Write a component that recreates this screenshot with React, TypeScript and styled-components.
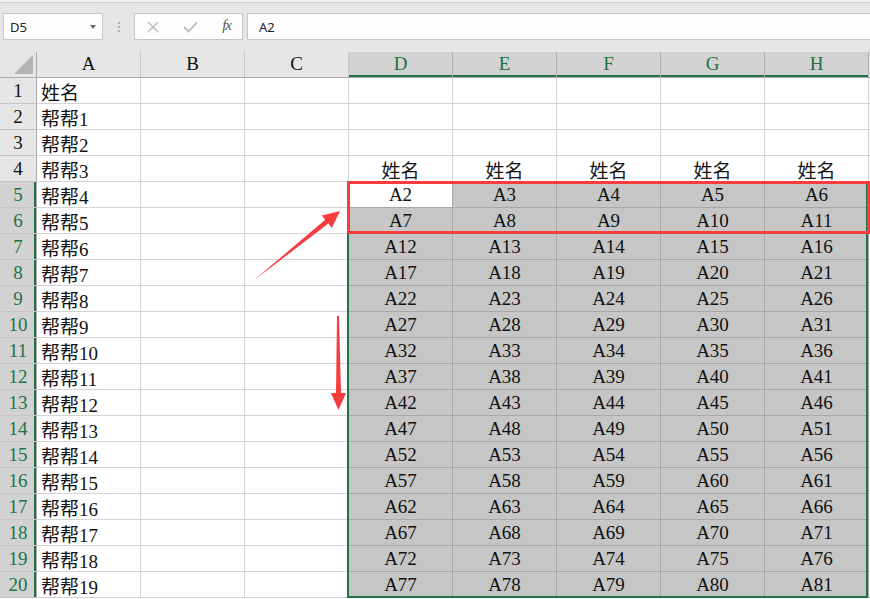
import * as React from 'react';
import styled, { createGlobalStyle } from 'styled-components';

const GREEN = '#217346';
const RED = '#f63c3c';
const COLS = ['A', 'B', 'C', 'D', 'E', 'F', 'G', 'H'];
const ROWS = Array.from({ length: 20 }, (_, i) => i + 1);

const GlobalStyle = createGlobalStyle`
  html, body {
    margin: 0;
    padding: 0;
    background: #ffffff;
    overflow: hidden;
  }
`;

const Page = styled.div`
  position: relative;
  width: 870px;
  height: 599px;
  overflow: hidden;
  font-family: 'Liberation Serif', 'Noto Sans CJK SC', serif;
`;

const TopStrip = styled.div`
  height: 2px;
  background: #f3f3f3;
  border-bottom: 1px solid #d2d2d2;
`;

const Toolbar = styled.div`
  display: flex;
  align-items: center;
  height: 49px;
  box-sizing: border-box;
  padding: 10px 0 12px 3px;
  background: #e6e6e6;
  font-family: 'Noto Sans', 'Open Sans', sans-serif;
  font-size: 13px;
  color: #222;
`;

const Box = styled.div`
  height: 27px;
  box-sizing: border-box;
  background: #fdfdfd;
  border: 1px solid #c6c6c6;
  display: flex;
  align-items: center;
`;

const NameBox = styled(Box)`
  width: 100px;
  padding: 0 6px 0 6px;
  justify-content: space-between;
`;

const DropArrow = styled.span`
  width: 0;
  height: 0;
  border-left: 3.5px solid transparent;
  border-right: 3.5px solid transparent;
  border-top: 4px solid #6a6a6a;
  margin-top: 1px;
`;

const Grip = styled.div`
  width: 31px;
  display: flex;
  flex-direction: column;
  align-items: center;
  gap: 2px;
`;

const GripDot = styled.span`
  width: 2px;
  height: 2px;
  background: #b0b0b0;
`;

const ButtonBox = styled(Box)`
  width: 109px;
  padding: 0 11px 0 12px;
  justify-content: space-between;
`;

const Fx = styled.span`
  font-family: 'Liberation Serif', serif;
  font-style: italic;
  font-size: 15px;
  color: #555;
  letter-spacing: -1px;
  margin-top: -2px;
`;

const FormulaInput = styled(Box)`
  flex: 1;
  margin-left: 4px;
  padding-left: 11px;
  border-right: none;
`;

const Grid = styled.div`
  display: grid;
  grid-template-columns: 37px repeat(8, 104px) 1fr;
  grid-auto-rows: 26px;
  font-size: 19px;
`;

const Corner = styled.div`
  background: #e6e6e6;
  border-right: 1px solid #ababab;
  border-bottom: 1px solid #ababab;
  box-sizing: border-box;
  display: flex;
  align-items: flex-end;
  justify-content: flex-end;
  padding: 0 3px 3px 0;
`;

const CornerMark = styled.span`
  width: 0;
  height: 0;
  border-left: 19px solid transparent;
  border-bottom: 19px solid #b4b4b4;
`;

const ColHead = styled.div<{ $sel?: boolean }>`
  box-sizing: border-box;
  background: ${(p) => (p.$sel ? '#d2d2d2' : '#e6e6e6')};
  color: ${(p) => (p.$sel ? GREEN : '#111')};
  border-right: 1px solid ${(p) => (p.$sel ? '#ababab' : '#c8c8c8')};
  border-bottom: 1px solid #ababab;
  box-shadow: ${(p) => (p.$sel ? `inset 0 -2px 0 ${GREEN}` : 'none')};
  display: flex;
  align-items: center;
  justify-content: center;
  padding-bottom: 1px;
`;

const RowHead = styled.div<{ $sel?: boolean }>`
  box-sizing: border-box;
  background: ${(p) => (p.$sel ? '#d2d2d2' : '#e6e6e6')};
  color: ${(p) => (p.$sel ? GREEN : '#111')};
  border-right: 1px solid #ababab;
  border-bottom: 1px solid #c6c6c6;
  box-shadow: ${(p) => (p.$sel ? `inset -2px 0 0 ${GREEN}` : 'none')};
  display: flex;
  align-items: center;
  justify-content: center;
  padding-top: 1px;
`;

const Cell = styled.div<{ $sel?: boolean; $active?: boolean; $center?: boolean }>`
  box-sizing: border-box;
  background: ${(p) => (p.$sel && !p.$active ? '#c6c6c6' : '#ffffff')};
  border-right: 1px solid ${(p) => (p.$sel ? '#a8a8a8' : '#d4d4d4')};
  border-bottom: 1px solid ${(p) => (p.$sel ? '#a8a8a8' : '#d4d4d4')};
  color: #111;
  display: flex;
  align-items: center;
  justify-content: ${(p) => (p.$center ? 'center' : 'flex-start')};
  padding: 1px 0 0 ${(p) => (p.$center ? '0' : '4px')};
  white-space: nowrap;
  overflow: hidden;
`;

const Selection = styled.div`
  position: absolute;
  left: 347px;
  top: 181px;
  width: 521px;
  height: 417px;
  box-sizing: border-box;
  border: 2px solid ${GREEN};
  pointer-events: none;
`;

const Highlight = styled.div`
  position: absolute;
  left: 347px;
  top: 181px;
  width: 523px;
  height: 53px;
  box-sizing: border-box;
  border: 3px solid ${RED};
  pointer-events: none;
`;

const Annotations = styled.svg`
  position: absolute;
  left: 0;
  top: 0;
  pointer-events: none;
`;

function cellText(row: number, col: number): string {
  if (col === 0) {
    if (row === 1) return '姓名';
    return '帮帮' + (row - 1);
  }
  if (col >= 3 && row === 4) return '姓名';
  if (col >= 3 && row >= 5) return 'A' + (2 + (row - 5) * 5 + (col - 3));
  return '';
}

export default function App() {
  return (
    <Page>
      <GlobalStyle />
      <TopStrip />
      <Toolbar>
        <NameBox>
          <span>D5</span>
          <DropArrow />
        </NameBox>
        <Grip>
          <GripDot />
          <GripDot />
          <GripDot />
        </Grip>
        <ButtonBox>
          <svg width="12" height="12" viewBox="0 0 12 12">
            <path d="M1 1 L11 11 M11 1 L1 11" stroke="#bcbcbc" strokeWidth="1.4" />
          </svg>
          <svg width="15" height="12" viewBox="0 0 15 12">
            <path d="M1 6 L5.5 10.5 L14 1.5" stroke="#bcbcbc" strokeWidth="1.8" fill="none" />
          </svg>
          <Fx>fx</Fx>
        </ButtonBox>
        <FormulaInput>A2</FormulaInput>
      </Toolbar>

      <Grid>
        <Corner>
          <CornerMark />
        </Corner>
        {COLS.map((c, i) => (
          <ColHead key={c} $sel={i >= 3}>
            {c}
          </ColHead>
        ))}
        <ColHead />
        {ROWS.map((r) => (
          <React.Fragment key={r}>
            <RowHead $sel={r >= 5}>{r}</RowHead>
            {COLS.map((c, i) => (
              <Cell
                key={c}
                $sel={r >= 5 && i >= 3}
                $active={r === 5 && i === 3}
                $center={i >= 3}
              >
                {cellText(r, i)}
              </Cell>
            ))}
            <Cell />
          </React.Fragment>
        ))}
      </Grid>

      <Selection />
      <Highlight />

      <Annotations width="870" height="599" viewBox="0 0 870 599">
        {/* diagonal arrow pointing at the red box */}
        <polygon
          points="253,281 328.4,223.6 331.8,227.9 340,211 321.8,215.5 325.2,219.8"
          fill={RED}
        />
        {/* downward arrow along the selection */}
        <polygon
          points="337,316 339,316 341,393 346,393 338.5,410 331,393 336,393"
          fill={RED}
        />
      </Annotations>
    </Page>
  );
}
